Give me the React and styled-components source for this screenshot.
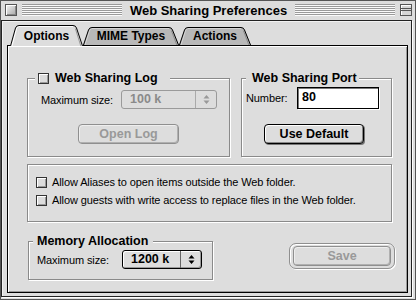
import React from 'react';
import styled, { createGlobalStyle } from 'styled-components';

const GlobalStyle = createGlobalStyle`
  html, body { margin: 0; padding: 0; background: #dddddd; }
  body { font-family: "Liberation Sans", Arial, sans-serif; color: #000; }
  * { box-sizing: border-box; }
`;

const Window = styled.div`
  width: 416px;
  height: 300px;
  border: 1px solid #555;
  background: #dddddd;
  display: flex;
  flex-direction: column;
`;

const TitleBar = styled.div`
  height: 19px;
  display: flex;
  align-items: flex-start;
  padding: 3px 3px 0 4px;
  gap: 5px;
`;

const CloseBox = styled.div`
  width: 12px;
  height: 12px;
  border: 1px solid #555;
  background: linear-gradient(135deg, #f4f4f4, #a8a8a8);
  box-shadow: inset 1px 1px 0 #fff, inset -1px -1px 0 #888;
`;

const Stripes = styled.div`
  flex: 1;
  height: 12px;
  background: repeating-linear-gradient(#9a9a9a 0 1px, #fafafa 1px 2px);
`;

const Title = styled.div`
  font-size: 13px;
  font-weight: bold;
  line-height: 13px;
  padding: 0 3px;
  white-space: nowrap;
`;

const Frame = styled.div`
  flex: 1;
  margin: 0 3px 2px 0;
  border: 1px solid #222;
  box-shadow: 1px 1px 0 #fff, inset 1px 1px 0 #f2f2f2;
  display: flex;
  flex-direction: column;
  padding: 4px 3px 3px 5px;
`;

const TabRow = styled.div`
  position: relative;
  z-index: 1;
  height: 21px;
  margin: 0 0 -1px 3px;
  display: flex;
  align-items: flex-end;
`;

const TabBox = styled.div`
  position: relative;
  width: ${p => p.$w}px;
  height: ${p => (p.$active ? 21 : 18)}px;
  margin-bottom: ${p => (p.$active ? 0 : 1)}px;
  display: flex;
  justify-content: center;
  padding-top: ${p => (p.$active ? 4 : 2)}px;
`;

const TabSvg = styled.svg`
  position: absolute;
  left: 0;
  top: 0;
`;

const TabLabel = styled.span`
  position: relative;
  font-size: 12px;
  font-weight: bold;
  line-height: 14px;
`;

function Tab({ w, active, children }) {
  const h = active ? 21 : 18;
  const fill = `M0 ${h} L5.2 3 Q6 0.5 9 0.5 L${w - 10} 0.5 Q${w - 7} 0.5 ${w - 6.2} 3 L${w} ${h} Z`;
  const line = `M0.5 ${h} L5.5 3 Q6.3 0.5 9 0.5 L${w - 10} 0.5 Q${w - 7.3} 0.5 ${w - 6.5} 3 L${w - 0.5} ${h}`;
  const light = `M2 ${h} L6.6 3.6 Q7.2 1.5 9 1.5 L${w - 10} 1.5`;
  const dark = `M${w - 7.6} 3.6 L${w - 2.2} ${h}`;
  return (
    <TabBox $w={w} $active={active}>
      <TabSvg width={w} height={h} viewBox={`0 0 ${w} ${h}`}>
        <path d={fill} fill={active ? '#dddddd' : '#b8b8b8'} />
        <path d={light} fill="none" stroke={active ? '#fff' : '#d4d4d4'} />
        <path d={dark} fill="none" stroke={active ? '#999' : '#8c8c8c'} />
        <path d={line} fill="none" stroke="#000" />
      </TabSvg>
      <TabLabel>{children}</TabLabel>
    </TabBox>
  );
}

const Panel = styled.div`
  flex: 1;
  border: 1px solid #000;
  box-shadow: inset 1px 1px 0 #fff, inset -1px -1px 0 #9a9a9a;
  padding: 32px 0 0 19px;
  display: flex;
  flex-direction: column;
`;

const Row = styled.div`
  display: flex;
  align-items: flex-start;
  gap: ${p => p.$gap || 0}px;
  margin-top: ${p => p.$mt || 0}px;
  margin-left: ${p => p.$ml || 0}px;
`;

const Group = styled.div`
  width: ${p => p.$w}px;
  height: ${p => p.$h}px;
  border: 1px solid #8a8a8a;
  box-shadow: 1px 1px 0 #fff, inset 1px 1px 0 #fff;
  display: flex;
  flex-direction: column;
  align-items: flex-start;
`;

const GroupTitle = styled.div`
  display: flex;
  align-items: center;
  gap: 6px;
  height: 16px;
  margin: -9px 0 0 ${p => p.$ml}px;
  padding: ${p => p.$pad};
  background: #dddddd;
  font-size: 12.5px;
  font-weight: bold;
  white-space: nowrap;
`;

const Line = styled.div`
  display: flex;
  align-items: center;
  margin: ${p => p.$m || '0'};
`;

const Text = styled.span`
  display: inline-block;
  width: ${p => (p.$w ? `${p.$w}px` : 'auto')};
  font-size: 11px;
  letter-spacing: -0.1px;
  white-space: nowrap;
`;

const Check = styled.span`
  width: 11px;
  height: 11px;
  flex: none;
  border: 1px solid #333;
  background: #dcdcdc;
  box-shadow: inset 1px 1px 0 #fff, inset -1px -1px 0 #999;
`;

const Popup = styled.div`
  width: ${p => p.$w}px;
  height: 19px;
  display: flex;
  border: 1px solid ${p => (p.$disabled ? '#9a9a9a' : '#000')};
  border-radius: 3px;
  background: #dddddd;
  box-shadow: ${p => (p.$disabled ? 'none' : 'inset 1px 1px 0 #fff, inset -1px -1px 0 #999')};
  color: ${p => (p.$disabled ? '#8a8a8a' : '#000')};
`;

const PopupValue = styled.span`
  flex: 1;
  padding-left: 8px;
  font-size: 12.5px;
  font-weight: bold;
  line-height: 17px;
`;

const PopupArrows = styled.span`
  width: 21px;
  display: flex;
  align-items: center;
  justify-content: center;
  border-left: 1px solid ${p => (p.$disabled ? '#aaa' : '#666')};
`;

function Arrows({ color }) {
  return (
    <svg width="7" height="11" viewBox="0 0 7 11">
      <path d="M0.5 4.5 L3.5 1 L6.5 4.5 Z M0.5 6.5 L3.5 10 L6.5 6.5 Z" fill={color} />
    </svg>
  );
}

const Button = styled.div`
  width: ${p => p.$w}px;
  height: 20px;
  display: flex;
  align-items: center;
  justify-content: center;
  margin: ${p => p.$m || '0'};
  border: 1px solid ${p => (p.$disabled ? '#8f8f8f' : '#000')};
  border-radius: 4px;
  background: #dddddd;
  box-shadow: ${p =>
    p.$disabled
      ? 'inset 1px 1px 0 #eee, inset -1px -1px 0 #b0b0b0'
      : 'inset 1px 1px 0 #fff, inset -1px -1px 0 #888, 1px 1px 0 #777'};
  color: ${p => (p.$disabled ? '#999' : '#000')};
  font-size: 12.5px;
  font-weight: bold;
`;

const DefaultRing = styled.div`
  margin: 2px 0 0 76px;
  padding: 2px 3px;
  border: 1px solid #8f8f8f;
  border-radius: 7px;
  box-shadow: inset 1px 1px 0 #fff, 1px 1px 0 #fff;
`;

const Field = styled.div`
  width: 82px;
  height: 22px;
  border: 1px solid #000;
  background: #fff;
  box-shadow: inset 1px 1px 0 #777, 1px 1px 0 #fff;
  padding: 2px 4px;
  font-size: 12.5px;
  font-weight: bold;
  line-height: 15px;
`;

const Checks = styled.div`
  display: flex;
  flex-direction: column;
  padding: 8px 0 0 8px;
`;

const CheckRow = styled.label`
  height: 18px;
  display: flex;
  align-items: center;
  gap: 5px;
`;

export default function App() {
  return (
    <>
      <GlobalStyle />
      <Window>
        <TitleBar>
          <CloseBox />
          <Stripes />
          <Title>Web Sharing Preferences</Title>
          <Stripes />
          <svg width="12" height="12" viewBox="0 0 12 12">
            <rect x="0.5" y="0.5" width="11" height="11" fill="#d6d6d6" stroke="#555" />
            <path d="M1 1.5 H11 M1.5 1 V11" stroke="#fff" />
            <path d="M0.5 4.5 H11.5 M0.5 6.5 H11.5" stroke="#555" />
          </svg>
        </TitleBar>
        <Frame>
          <TabRow>
            <Tab w={73} active>Options</Tab>
            <Tab w={96}>MIME Types</Tab>
            <Tab w={72}>Actions</Tab>
          </TabRow>
          <Panel>
            <Row $gap={11}>
              <Group $w={203} $h={79}>
                <GroupTitle $ml={7} $pad="0 12px 0 3px">
                  <Check />
                  Web Sharing Log
                </GroupTitle>
                <Line $m="4px 0 0 13px">
                  <Text $w={80}>Maximum size:</Text>
                  <Popup $w={96} $disabled>
                    <PopupValue>100 k</PopupValue>
                    <PopupArrows $disabled><Arrows color="#999" /></PopupArrows>
                  </Popup>
                </Line>
                <Button $w={101} $m="15px 0 0 50px" $disabled>Open Log</Button>
              </Group>
              <Group $w={151} $h={79}>
                <GroupTitle $ml={4} $pad="0 2px 0 6px">Web Sharing Port</GroupTitle>
                <Line $m="1px 0 0 4px">
                  <Text $w={51}>Number:</Text>
                  <Field>80</Field>
                </Line>
                <Button $w={100} $m="15px 0 0 22px">Use Default</Button>
              </Group>
            </Row>
            <Row $mt={7}>
              <Group $w={365} $h={58}>
                <Checks>
                  <CheckRow>
                    <Check />
                    <Text>Allow Aliases to open items outside the Web folder.</Text>
                  </CheckRow>
                  <CheckRow>
                    <Check />
                    <Text>Allow guests with write access to replace files in the Web folder.</Text>
                  </CheckRow>
                </Checks>
              </Group>
            </Row>
            <Row $mt={19} $ml={1}>
              <Group $w={185} $h={39}>
                <GroupTitle $ml={4} $pad="0 5px 0 4px">Memory Allocation</GroupTitle>
                <Line $m="1px 0 0 8px">
                  <Text $w={85}>Maximum size:</Text>
                  <Popup $w={80}>
                    <PopupValue>1200 k</PopupValue>
                    <PopupArrows><Arrows color="#000" /></PopupArrows>
                  </Popup>
                </Line>
              </Group>
              <DefaultRing>
                <Button $w={98} $disabled>Save</Button>
              </DefaultRing>
            </Row>
          </Panel>
        </Frame>
      </Window>
    </>
  );
}
